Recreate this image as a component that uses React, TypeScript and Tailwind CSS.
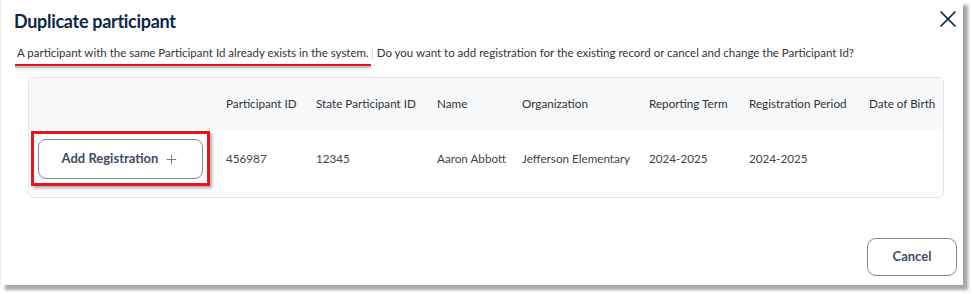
import { X, Plus } from "lucide-react";

const columns = [
  "",
  "Participant ID",
  "State Participant ID",
  "Name",
  "Organization",
  "Reporting Term",
  "Registration Period",
  "Date of Birth",
];

const row = ["456987", "12345", "Aaron Abbott", "Jefferson Elementary", "2024-2025", "2024-2025", ""];

export default function App() {
  return (
    <div className="w-[972px] h-[294px] bg-white font-['Lato','Noto_Sans',sans-serif]">
      <div className="relative w-[963px] h-[285px] bg-white border-l border-[#eeeeee] shadow-[5px_5px_3px_rgba(0,0,0,0.35)]">
        <div className="flex items-start justify-between pl-[13px] pr-[1px] pt-[7px]">
          <h1 className="text-[18px] leading-[28px] font-bold text-[#0e2747] tracking-[-0.3px]">
            Duplicate participant
          </h1>
          <button className="-mt-[2px] text-[#0e2747]">
            <X size={28} strokeWidth={1.5} />
          </button>
        </div>

        <p className="mt-[10px] pl-[16px] text-[11.5px] leading-[16px] text-[#333]">
          <span className="relative">
            A participant with the same Participant Id already exists in the system.
            <span className="absolute -left-[2px] -right-[2px] top-[18px] h-[2px] bg-[#e8141c] shadow-[0_2px_2px_rgba(0,0,0,0.35)]" />
          </span>
          <span className="inline-block w-px h-[12px] bg-[#ddd] ml-[3px] mr-[4px] align-middle" />
          Do you want to add registration for the existing record or cancel and change the Participant Id?
        </p>

        <div className="mx-[27px] mt-[16px] w-[916px] rounded-[6px] border border-[#dfe4ea] overflow-hidden">
          <div className="grid grid-cols-[197px_90px_121px_85px_127px_100px_120px_1fr] h-[51px] items-center bg-[#f7f8fa] text-[11.7px] text-[#333]">
            {columns.map((c, i) => (
              <div key={i} className="whitespace-nowrap">
                {c}
              </div>
            ))}
          </div>
          <div className="grid grid-cols-[197px_90px_121px_85px_127px_100px_120px_1fr] h-[68px] pt-[10px] pb-[18px] items-center bg-white text-[11.7px] text-[#444]">
            <div className="pl-[9px]">
              <div className="relative w-[165px]">
                <button className="flex items-center justify-center gap-[6px] w-[165px] h-[40px] rounded-[8px] border border-[#7f8a9a] bg-white text-[13px] font-bold text-[#3e4c60]">
                  Add Registration
                  <Plus size={15} strokeWidth={1.5} className="text-[#6b7685]" />
                </button>
                <div className="pointer-events-none absolute -left-[7px] -right-[7px] -top-[8px] -bottom-[7px] border-[3px] border-[#e8141c] shadow-[2px_2px_3px_rgba(0,0,0,0.35)]" />
              </div>
            </div>
            {row.map((v, i) => (
              <div key={i} className="whitespace-nowrap">
                {v}
              </div>
            ))}
          </div>
        </div>

        <div className="flex justify-end pr-[6px] mt-[40px]">
          <button className="w-[90px] h-[38px] rounded-[9px] border border-[#7f8a9a] bg-white text-[13px] font-bold text-[#3e4c60]">
            Cancel
          </button>
        </div>
      </div>
    </div>
  );
}
